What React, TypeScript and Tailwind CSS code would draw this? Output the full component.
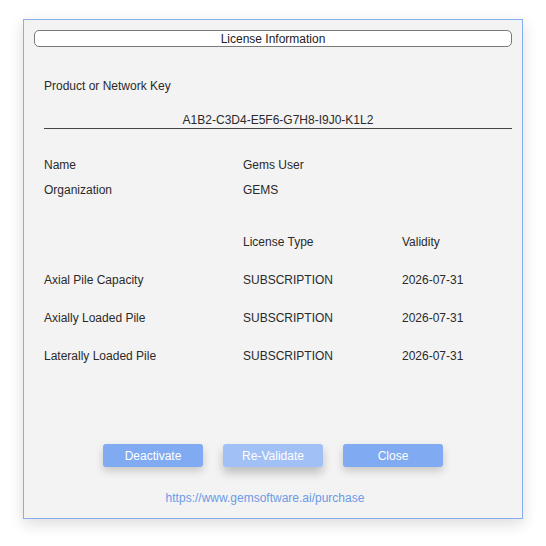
import React from "react";

const rows = [
  ["Axial Pile Capacity", "SUBSCRIPTION", "2026-07-31"],
  ["Axially Loaded Pile", "SUBSCRIPTION", "2026-07-31"],
  ["Laterally Loaded Pile", "SUBSCRIPTION", "2026-07-31"],
];

export default function App() {
  return (
    <div
      className="w-[546px] h-[546px] bg-white pt-[19px] pl-[23px]"
      style={{ fontFamily: '"Liberation Sans", Arial, sans-serif' }}
    >
      <div className="w-[500px] h-[500px] border border-[#85aef0] bg-[#f3f3f3] shadow-[0_5px_14px_rgba(0,0,0,0.14)] flex flex-col text-[12px] leading-[16px] text-[#2a2a2a]">
        <div className="mt-[10px] ml-[10px] w-[478px] h-[17px] rounded-[5px] border border-[#7a7a7a] bg-white flex items-center justify-center text-[#222] leading-[15px] pt-[1px]">
          License Information
        </div>
        <div className="ml-[20px] w-[468px] flex flex-col">
          <div className="mt-[31px]">Product or Network Key</div>
          <div className="mt-[18px] border-b border-[#444] text-center">
            A1B2-C3D4-E5F6-G7H8-I9J0-K1L2
          </div>
          <div className="grid grid-cols-[199px_1fr] mt-[28px]">
            <div>Name</div>
            <div>Gems User</div>
          </div>
          <div className="grid grid-cols-[199px_1fr] mt-[9px]">
            <div>Organization</div>
            <div>GEMS</div>
          </div>
          <div className="grid grid-cols-[199px_159px_1fr] mt-[36px]">
            <div></div>
            <div>License Type</div>
            <div>Validity</div>
          </div>
          {rows.map((r) => (
            <div key={r[0]} className="grid grid-cols-[199px_159px_1fr] mt-[22px]">
              <div>{r[0]}</div>
              <div>{r[1]}</div>
              <div>{r[2]}</div>
            </div>
          ))}
        </div>
        <div className="mt-[80px] flex justify-center gap-[20px]">
          <button className="w-[100px] h-[23px] rounded-[3px] bg-[#80aaf1] text-white text-[12px] shadow-[0_4px_8px_rgba(0,0,0,0.18)]">
            Deactivate
          </button>
          <button className="w-[100px] h-[23px] rounded-[3px] bg-[#a1c0f5] text-white text-[12px] shadow-[0_6px_10px_rgba(0,0,0,0.22)]">
            Re-Validate
          </button>
          <button className="w-[100px] h-[23px] rounded-[3px] bg-[#80aaf1] text-white text-[12px] shadow-[0_4px_8px_rgba(0,0,0,0.18)]">
            Close
          </button>
        </div>
        <div className="mt-[23px] text-center text-[#6c9ae6] ml-[-16px]">
          https://www.gemsoftware.ai/purchase
        </div>
      </div>
    </div>
  );
}
